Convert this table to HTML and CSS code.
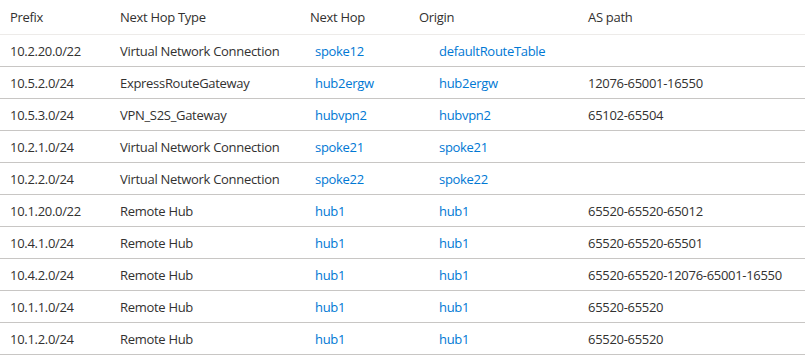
FILE: index.html
```html
<!DOCTYPE html>
<html lang="en">
<head>
  <meta charset="UTF-8">
  <meta name="viewport" content="width=device-width, initial-scale=1.0">
  <title>Effective Routes</title>
  <link rel="stylesheet" href="styles.css">
</head>
<body>
  <!-- Effective routes grid -->
  <table class="routes">
    <colgroup>
      <col class="col-prefix">
      <col class="col-type">
      <col class="col-hop">
      <col class="col-origin">
      <col class="col-path">
    </colgroup>
    <thead>
      <tr>
        <th>Prefix</th>
        <th>Next Hop Type</th>
        <th>Next Hop</th>
        <th>Origin</th>
        <th>AS path</th>
      </tr>
    </thead>
    <tbody>
      <tr>
        <td>10.2.20.0/22</td>
        <td>Virtual Network Connection</td>
        <td><a class="hop-link" href="#">spoke12</a></td>
        <td><a class="origin-link" href="#">defaultRouteTable</a></td>
        <td></td>
      </tr>
      <tr>
        <td>10.5.2.0/24</td>
        <td>ExpressRouteGateway</td>
        <td><a class="hop-link" href="#">hub2ergw</a></td>
        <td><a class="origin-link" href="#">hub2ergw</a></td>
        <td>12076-65001-16550</td>
      </tr>
      <tr>
        <td>10.5.3.0/24</td>
        <td>VPN_S2S_Gateway</td>
        <td><a class="hop-link" href="#">hubvpn2</a></td>
        <td><a class="origin-link" href="#">hubvpn2</a></td>
        <td>65102-65504</td>
      </tr>
      <tr>
        <td>10.2.1.0/24</td>
        <td>Virtual Network Connection</td>
        <td><a class="hop-link" href="#">spoke21</a></td>
        <td><a class="origin-link" href="#">spoke21</a></td>
        <td></td>
      </tr>
      <tr>
        <td>10.2.2.0/24</td>
        <td>Virtual Network Connection</td>
        <td><a class="hop-link" href="#">spoke22</a></td>
        <td><a class="origin-link" href="#">spoke22</a></td>
        <td></td>
      </tr>
      <tr>
        <td>10.1.20.0/22</td>
        <td>Remote Hub</td>
        <td><a class="hop-link" href="#">hub1</a></td>
        <td><a class="origin-link" href="#">hub1</a></td>
        <td>65520-65520-65012</td>
      </tr>
      <tr>
        <td>10.4.1.0/24</td>
        <td>Remote Hub</td>
        <td><a class="hop-link" href="#">hub1</a></td>
        <td><a class="origin-link" href="#">hub1</a></td>
        <td>65520-65520-65501</td>
      </tr>
      <tr>
        <td>10.4.2.0/24</td>
        <td>Remote Hub</td>
        <td><a class="hop-link" href="#">hub1</a></td>
        <td><a class="origin-link" href="#">hub1</a></td>
        <td>65520-65520-12076-65001-16550</td>
      </tr>
      <tr>
        <td>10.1.1.0/24</td>
        <td>Remote Hub</td>
        <td><a class="hop-link" href="#">hub1</a></td>
        <td><a class="origin-link" href="#">hub1</a></td>
        <td>65520-65520</td>
      </tr>
      <tr>
        <td>10.1.2.0/24</td>
        <td>Remote Hub</td>
        <td><a class="hop-link" href="#">hub1</a></td>
        <td><a class="origin-link" href="#">hub1</a></td>
        <td>65520-65520</td>
      </tr>
    </tbody>
  </table>
</body>
</html>
```

FILE: styles.css
```css
/* Page */
body {
  margin: 0;
  font-family: "Open Sans", "Noto Sans", Arial, sans-serif;
  font-size: 13px;
  letter-spacing: -0.3px;
  color: #323130;
  background-color: #ffffff;
}
/* Routes grid */
.routes {
  width: 100%;
  border-collapse: collapse;
  table-layout: fixed;
}
.col-prefix { width: 110px; }
.col-type { width: 190px; }
.col-hop { width: 109px; }
.col-origin { width: 169px; }
.routes th,
.routes td {
  padding: 0 0 0 10px;
  text-align: left;
  white-space: nowrap;
}
.routes th {
  height: 34px;
  font-weight: normal;
  border-bottom: 1px solid #edebe9;
}
.routes td {
  height: 31px;
  border-bottom: 1px solid #c8c6c4;
}
/* Links */
.routes a {
  color: #0078d4;
  text-decoration: none;
}
.hop-link {
  padding-left: 5px;
}
.origin-link {
  padding-left: 20px;
}
```
